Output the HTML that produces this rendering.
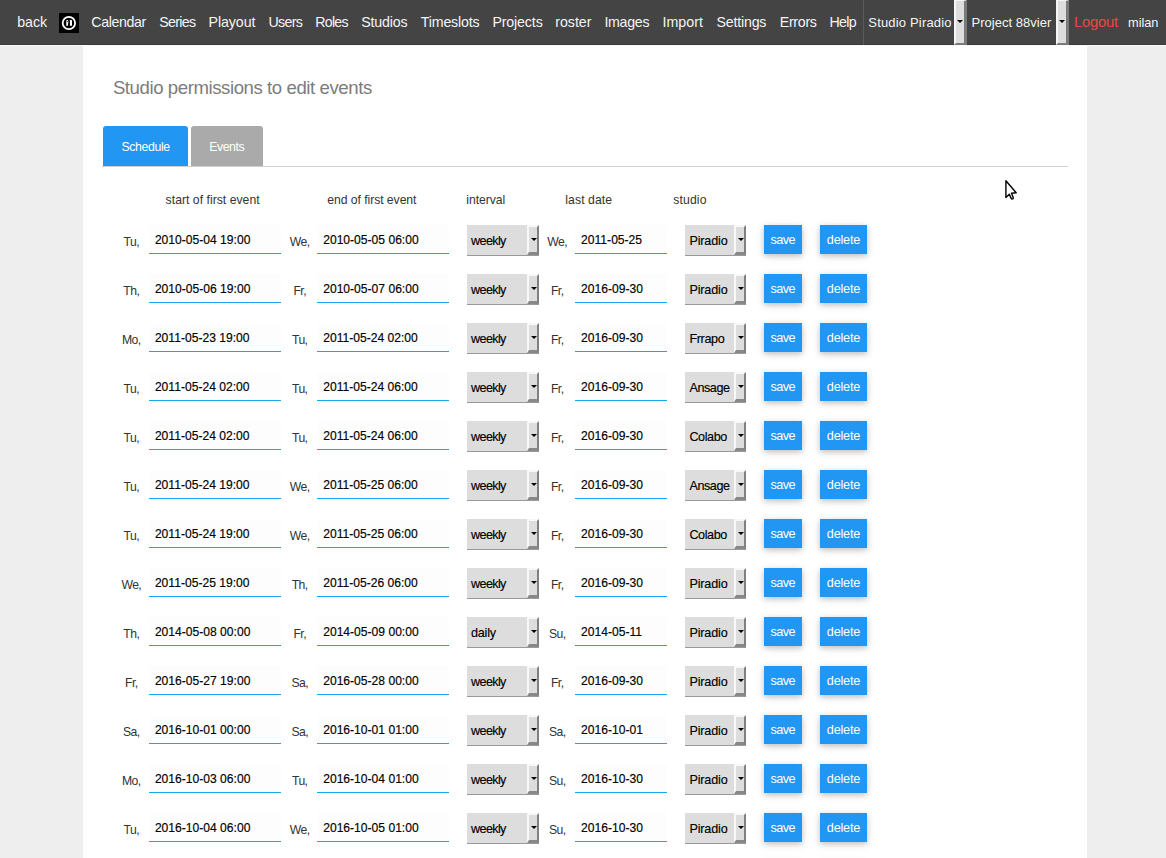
<!DOCTYPE html>
<html><head><meta charset="utf-8"><style>
html,body{margin:0;padding:0;width:1166px;height:858px;overflow:hidden;background:#eeeeee;}
body{position:relative;font-family:"Liberation Sans",sans-serif;}
.t{position:absolute;line-height:1;white-space:nowrap;}
#nav{position:absolute;left:0;top:0;width:1166px;height:44px;background:#444444;border-bottom:1px solid #3a3a3a;}
#navline{position:absolute;left:0;top:45px;width:1166px;height:1px;background:#fafafa;}
#panel{position:absolute;left:83px;top:45px;width:1004px;height:813px;background:#ffffff;}
.logo{position:absolute;left:59px;top:13px;width:20px;height:20px;background:#000;}
.nsel{position:absolute;top:0;height:45px;}
.nab{position:absolute;top:0;width:8px;height:42px;background:#dddddd;border-left:2px solid #f6f6f6;border-top:1px solid #f6f6f6;border-right:3px solid #7a7a7a;border-bottom:2px solid #7a7a7a;}
.nab i,.ab i{position:absolute;left:1px;width:0;height:0;border-left:3px solid transparent;border-right:3px solid transparent;border-top:3.5px solid #000;}
.nab i{top:19px;left:0.5px;}
.tab{position:absolute;top:126px;height:40px;border-radius:3px 3px 0 0;}
#tabline{position:absolute;left:102px;top:165.5px;width:966px;height:1px;background:#cfcfcf;}
.inp{position:absolute;height:28px;background:#fdfdfd;border-bottom:1px solid #18a8f0;}
.sel{position:absolute;height:30px;background:#dddddd;border-bottom:1px solid #999999;}
.ab{position:absolute;right:0;top:0;width:8px;height:25px;background:#dddddd;border-left:2px solid #f8f8f8;border-top:2px solid #f8f8f8;border-right:2px solid #808080;border-bottom:3px solid #888888;}
.ab i{top:11px;left:1.6px;}
.btn{position:absolute;height:29px;background:#2196f3;box-shadow:0 2px 5px 0 rgba(0,0,0,.16),0 2px 10px 0 rgba(0,0,0,.12);}
</style></head><body>
<div id="panel"></div>
<div id="nav"></div><div id="navline"></div>
<div class="logo"><svg width="20" height="20" viewBox="0 0 20 20"><circle cx="9.9" cy="10" r="6.2" fill="none" stroke="#fff" stroke-width="1.8"/><path d="M7.3 12.8V8.2Q7.1 7 8.2 7Q9.3 7 9.3 8.2V10.2L9 10.8V12.8Z" fill="#fff"/><circle cx="8.3" cy="8.6" r="0.5" fill="#000"/><rect x="10.9" y="7.1" width="2.1" height="5.7" rx="0.3" fill="#fff"/></svg></div>
<div style="position:absolute;left:863px;top:0;width:1px;height:45px;background:#5a5a5a"></div>
<div class="nab" style="left:954px"><i></i></div>
<div class="nab" style="left:1056px"><i></i></div>
<div class="tab" style="left:103px;width:85px;background:#2196f3"></div>
<div class="tab" style="left:191px;width:72px;background:#aaaaaa"></div>
<div id="tabline"></div>
<div class="t" style="left:17.20px;top:14.93px;font-size:14.2px;color:#f4f4f4;letter-spacing:-0.017px;">back</div>
<div class="t" style="left:91.30px;top:14.93px;font-size:14.2px;color:#f4f4f4;letter-spacing:-0.379px;">Calendar</div>
<div class="t" style="left:159.20px;top:14.93px;font-size:14.2px;color:#f4f4f4;letter-spacing:-0.650px;">Series</div>
<div class="t" style="left:208.50px;top:14.93px;font-size:14.2px;color:#f4f4f4;letter-spacing:-0.058px;">Playout</div>
<div class="t" style="left:268.50px;top:14.93px;font-size:14.2px;color:#f4f4f4;letter-spacing:-0.650px;">Users</div>
<div class="t" style="left:315.30px;top:14.93px;font-size:14.2px;color:#f4f4f4;letter-spacing:-0.775px;">Roles</div>
<div class="t" style="left:361.30px;top:14.93px;font-size:14.2px;color:#f4f4f4;letter-spacing:-0.175px;">Studios</div>
<div class="t" style="left:420.80px;top:14.93px;font-size:14.2px;color:#f4f4f4;letter-spacing:-0.169px;">Timeslots</div>
<div class="t" style="left:492.40px;top:14.93px;font-size:14.2px;color:#f4f4f4;letter-spacing:-0.129px;">Projects</div>
<div class="t" style="left:555.30px;top:14.93px;font-size:14.2px;color:#f4f4f4;letter-spacing:-0.040px;">roster</div>
<div class="t" style="left:604.40px;top:14.93px;font-size:14.2px;color:#f4f4f4;letter-spacing:-0.270px;">Images</div>
<div class="t" style="left:662.50px;top:14.93px;font-size:14.2px;color:#f4f4f4;letter-spacing:0.030px;">Import</div>
<div class="t" style="left:716.60px;top:14.93px;font-size:14.2px;color:#f4f4f4;letter-spacing:-0.200px;">Settings</div>
<div class="t" style="left:779.70px;top:14.93px;font-size:14.2px;color:#f4f4f4;letter-spacing:-0.270px;">Errors</div>
<div class="t" style="left:829.40px;top:14.93px;font-size:14.2px;color:#f4f4f4;letter-spacing:-0.667px;">Help</div>
<div class="t" style="left:868.30px;top:15.95px;font-size:13px;color:#f4f4f4;letter-spacing:0.173px;">Studio Piradio</div>
<div class="t" style="left:971.60px;top:15.95px;font-size:13px;color:#f4f4f4;letter-spacing:0.015px;">Project 88vier</div>
<div class="t" style="left:1073.90px;top:14.72px;font-size:14.8px;color:#f04545;letter-spacing:-0.210px;">Logout</div>
<div class="t" style="left:1128.10px;top:16.72px;font-size:12.8px;color:#f4f4f4;letter-spacing:-0.100px;">milan</div>
<div class="t" style="left:112.90px;top:78.89px;font-size:18.6px;color:#7c7c7c;letter-spacing:-0.423px;">Studio permissions to edit events</div>
<div class="t" style="left:121.50px;top:141.14px;font-size:12.3px;color:#ffffff;letter-spacing:-0.371px;">Schedule</div>
<div class="t" style="left:209.20px;top:141.14px;font-size:12.3px;color:#ffffff;letter-spacing:-0.420px;">Events</div>
<div class="t" style="left:165.60px;top:193.83px;font-size:12.2px;color:#333333;letter-spacing:0.029px;">start of first event</div>
<div class="t" style="left:327.20px;top:193.83px;font-size:12.2px;color:#333333;letter-spacing:-0.047px;">end of first event</div>
<div class="t" style="left:466.30px;top:193.83px;font-size:12.2px;color:#333333;letter-spacing:-0.064px;">interval</div>
<div class="t" style="left:565.30px;top:193.83px;font-size:12.2px;color:#333333;letter-spacing:0.088px;">last date</div>
<div class="t" style="left:673.30px;top:193.83px;font-size:12.2px;color:#333333;letter-spacing:0.130px;">studio</div>
<div class="t" style="left:123.55px;top:235.93px;font-size:12.2px;color:#333333;letter-spacing:-0.550px;">Tu,</div>
<div class="inp" style="left:149px;top:225px;width:132px"></div>
<div class="t" style="left:154.90px;top:233.72px;font-size:12.1px;color:#000000;letter-spacing:0.000px;-webkit-text-stroke:0.15px #000;">2010-05-04 19:00</div>
<div class="t" style="left:289.82px;top:235.93px;font-size:12.2px;color:#333333;letter-spacing:-0.550px;">We,</div>
<div class="inp" style="left:317px;top:225px;width:132px"></div>
<div class="t" style="left:323.20px;top:233.72px;font-size:12.1px;color:#000000;letter-spacing:0.000px;-webkit-text-stroke:0.15px #000;">2010-05-05 06:00</div>
<div class="sel" style="left:467px;top:225px;width:72px"><div class="ab"><i></i></div></div>
<div class="t" style="left:471.05px;top:234.79px;font-size:12.6px;color:#000000;letter-spacing:-0.630px;-webkit-text-stroke:0.15px #000;">weekly</div>
<div class="t" style="left:547.33px;top:235.93px;font-size:12.2px;color:#333333;letter-spacing:-0.550px;">We,</div>
<div class="inp" style="left:575px;top:225px;width:92px"></div>
<div class="t" style="left:581.10px;top:233.72px;font-size:12.1px;color:#000000;letter-spacing:0.000px;-webkit-text-stroke:0.15px #000;">2011-05-25</div>
<div class="sel" style="left:685px;top:225px;width:61px"><div class="ab"><i></i></div></div>
<div class="t" style="left:689.40px;top:234.79px;font-size:12.6px;color:#000000;letter-spacing:-0.150px;-webkit-text-stroke:0.15px #000;">Piradio</div>
<div class="btn" style="left:764px;top:225px;width:38px"></div>
<div class="t" style="left:770.60px;top:234.01px;font-size:12.7px;color:#ffffff;letter-spacing:-0.650px;">save</div>
<div class="btn" style="left:820px;top:225px;width:47px"></div>
<div class="t" style="left:826.80px;top:233.91px;font-size:12.7px;color:#ffffff;letter-spacing:-0.220px;">delete</div>
<div class="t" style="left:123.32px;top:284.93px;font-size:12.2px;color:#333333;letter-spacing:-0.550px;">Th,</div>
<div class="inp" style="left:149px;top:274px;width:132px"></div>
<div class="t" style="left:154.90px;top:282.71px;font-size:12.1px;color:#000000;letter-spacing:0.000px;-webkit-text-stroke:0.15px #000;">2010-05-06 19:00</div>
<div class="t" style="left:293.43px;top:284.93px;font-size:12.2px;color:#333333;letter-spacing:-0.550px;">Fr,</div>
<div class="inp" style="left:317px;top:274px;width:132px"></div>
<div class="t" style="left:323.20px;top:282.71px;font-size:12.1px;color:#000000;letter-spacing:0.000px;-webkit-text-stroke:0.15px #000;">2010-05-07 06:00</div>
<div class="sel" style="left:467px;top:274px;width:72px"><div class="ab"><i></i></div></div>
<div class="t" style="left:471.05px;top:283.79px;font-size:12.6px;color:#000000;letter-spacing:-0.630px;-webkit-text-stroke:0.15px #000;">weekly</div>
<div class="t" style="left:550.92px;top:284.93px;font-size:12.2px;color:#333333;letter-spacing:-0.550px;">Fr,</div>
<div class="inp" style="left:575px;top:274px;width:92px"></div>
<div class="t" style="left:581.10px;top:282.71px;font-size:12.1px;color:#000000;letter-spacing:0.000px;-webkit-text-stroke:0.15px #000;">2016-09-30</div>
<div class="sel" style="left:685px;top:274px;width:61px"><div class="ab"><i></i></div></div>
<div class="t" style="left:689.40px;top:283.79px;font-size:12.6px;color:#000000;letter-spacing:-0.150px;-webkit-text-stroke:0.15px #000;">Piradio</div>
<div class="btn" style="left:764px;top:274px;width:38px"></div>
<div class="t" style="left:770.60px;top:283.00px;font-size:12.7px;color:#ffffff;letter-spacing:-0.650px;">save</div>
<div class="btn" style="left:820px;top:274px;width:47px"></div>
<div class="t" style="left:826.80px;top:282.90px;font-size:12.7px;color:#ffffff;letter-spacing:-0.220px;">delete</div>
<div class="t" style="left:121.97px;top:333.93px;font-size:12.2px;color:#333333;letter-spacing:-0.550px;">Mo,</div>
<div class="inp" style="left:149px;top:323px;width:132px"></div>
<div class="t" style="left:154.90px;top:331.71px;font-size:12.1px;color:#000000;letter-spacing:0.000px;-webkit-text-stroke:0.15px #000;">2011-05-23 19:00</div>
<div class="t" style="left:291.95px;top:333.93px;font-size:12.2px;color:#333333;letter-spacing:-0.550px;">Tu,</div>
<div class="inp" style="left:317px;top:323px;width:132px"></div>
<div class="t" style="left:323.20px;top:331.71px;font-size:12.1px;color:#000000;letter-spacing:0.000px;-webkit-text-stroke:0.15px #000;">2011-05-24 02:00</div>
<div class="sel" style="left:467px;top:323px;width:72px"><div class="ab"><i></i></div></div>
<div class="t" style="left:471.05px;top:332.79px;font-size:12.6px;color:#000000;letter-spacing:-0.630px;-webkit-text-stroke:0.15px #000;">weekly</div>
<div class="t" style="left:550.92px;top:333.93px;font-size:12.2px;color:#333333;letter-spacing:-0.550px;">Fr,</div>
<div class="inp" style="left:575px;top:323px;width:92px"></div>
<div class="t" style="left:581.10px;top:331.71px;font-size:12.1px;color:#000000;letter-spacing:0.000px;-webkit-text-stroke:0.15px #000;">2016-09-30</div>
<div class="sel" style="left:685px;top:323px;width:61px"><div class="ab"><i></i></div></div>
<div class="t" style="left:689.40px;top:332.79px;font-size:12.6px;color:#000000;letter-spacing:-0.360px;-webkit-text-stroke:0.15px #000;">Frrapo</div>
<div class="btn" style="left:764px;top:323px;width:38px"></div>
<div class="t" style="left:770.60px;top:332.00px;font-size:12.7px;color:#ffffff;letter-spacing:-0.650px;">save</div>
<div class="btn" style="left:820px;top:323px;width:47px"></div>
<div class="t" style="left:826.80px;top:331.90px;font-size:12.7px;color:#ffffff;letter-spacing:-0.220px;">delete</div>
<div class="t" style="left:123.55px;top:382.93px;font-size:12.2px;color:#333333;letter-spacing:-0.550px;">Tu,</div>
<div class="inp" style="left:149px;top:372px;width:132px"></div>
<div class="t" style="left:154.90px;top:380.71px;font-size:12.1px;color:#000000;letter-spacing:0.000px;-webkit-text-stroke:0.15px #000;">2011-05-24 02:00</div>
<div class="t" style="left:291.95px;top:382.93px;font-size:12.2px;color:#333333;letter-spacing:-0.550px;">Tu,</div>
<div class="inp" style="left:317px;top:372px;width:132px"></div>
<div class="t" style="left:323.20px;top:380.71px;font-size:12.1px;color:#000000;letter-spacing:0.000px;-webkit-text-stroke:0.15px #000;">2011-05-24 06:00</div>
<div class="sel" style="left:467px;top:372px;width:72px"><div class="ab"><i></i></div></div>
<div class="t" style="left:471.05px;top:381.79px;font-size:12.6px;color:#000000;letter-spacing:-0.630px;-webkit-text-stroke:0.15px #000;">weekly</div>
<div class="t" style="left:550.92px;top:382.93px;font-size:12.2px;color:#333333;letter-spacing:-0.550px;">Fr,</div>
<div class="inp" style="left:575px;top:372px;width:92px"></div>
<div class="t" style="left:581.10px;top:380.71px;font-size:12.1px;color:#000000;letter-spacing:0.000px;-webkit-text-stroke:0.15px #000;">2016-09-30</div>
<div class="sel" style="left:685px;top:372px;width:61px"><div class="ab"><i></i></div></div>
<div class="t" style="left:689.40px;top:381.79px;font-size:12.6px;color:#000000;letter-spacing:-0.410px;-webkit-text-stroke:0.15px #000;">Ansage</div>
<div class="btn" style="left:764px;top:372px;width:38px"></div>
<div class="t" style="left:770.60px;top:381.00px;font-size:12.7px;color:#ffffff;letter-spacing:-0.650px;">save</div>
<div class="btn" style="left:820px;top:372px;width:47px"></div>
<div class="t" style="left:826.80px;top:380.90px;font-size:12.7px;color:#ffffff;letter-spacing:-0.220px;">delete</div>
<div class="t" style="left:123.55px;top:431.93px;font-size:12.2px;color:#333333;letter-spacing:-0.550px;">Tu,</div>
<div class="inp" style="left:149px;top:421px;width:132px"></div>
<div class="t" style="left:154.90px;top:429.71px;font-size:12.1px;color:#000000;letter-spacing:0.000px;-webkit-text-stroke:0.15px #000;">2011-05-24 02:00</div>
<div class="t" style="left:291.95px;top:431.93px;font-size:12.2px;color:#333333;letter-spacing:-0.550px;">Tu,</div>
<div class="inp" style="left:317px;top:421px;width:132px"></div>
<div class="t" style="left:323.20px;top:429.71px;font-size:12.1px;color:#000000;letter-spacing:0.000px;-webkit-text-stroke:0.15px #000;">2011-05-24 06:00</div>
<div class="sel" style="left:467px;top:421px;width:72px"><div class="ab"><i></i></div></div>
<div class="t" style="left:471.05px;top:430.79px;font-size:12.6px;color:#000000;letter-spacing:-0.630px;-webkit-text-stroke:0.15px #000;">weekly</div>
<div class="t" style="left:550.92px;top:431.93px;font-size:12.2px;color:#333333;letter-spacing:-0.550px;">Fr,</div>
<div class="inp" style="left:575px;top:421px;width:92px"></div>
<div class="t" style="left:581.10px;top:429.71px;font-size:12.1px;color:#000000;letter-spacing:0.000px;-webkit-text-stroke:0.15px #000;">2016-09-30</div>
<div class="sel" style="left:685px;top:421px;width:61px"><div class="ab"><i></i></div></div>
<div class="t" style="left:689.40px;top:430.79px;font-size:12.6px;color:#000000;letter-spacing:-0.410px;-webkit-text-stroke:0.15px #000;">Colabo</div>
<div class="btn" style="left:764px;top:421px;width:38px"></div>
<div class="t" style="left:770.60px;top:430.00px;font-size:12.7px;color:#ffffff;letter-spacing:-0.650px;">save</div>
<div class="btn" style="left:820px;top:421px;width:47px"></div>
<div class="t" style="left:826.80px;top:429.90px;font-size:12.7px;color:#ffffff;letter-spacing:-0.220px;">delete</div>
<div class="t" style="left:123.55px;top:480.93px;font-size:12.2px;color:#333333;letter-spacing:-0.550px;">Tu,</div>
<div class="inp" style="left:149px;top:470px;width:132px"></div>
<div class="t" style="left:154.90px;top:478.71px;font-size:12.1px;color:#000000;letter-spacing:0.000px;-webkit-text-stroke:0.15px #000;">2011-05-24 19:00</div>
<div class="t" style="left:289.82px;top:480.93px;font-size:12.2px;color:#333333;letter-spacing:-0.550px;">We,</div>
<div class="inp" style="left:317px;top:470px;width:132px"></div>
<div class="t" style="left:323.20px;top:478.71px;font-size:12.1px;color:#000000;letter-spacing:0.000px;-webkit-text-stroke:0.15px #000;">2011-05-25 06:00</div>
<div class="sel" style="left:467px;top:470px;width:72px"><div class="ab"><i></i></div></div>
<div class="t" style="left:471.05px;top:479.79px;font-size:12.6px;color:#000000;letter-spacing:-0.630px;-webkit-text-stroke:0.15px #000;">weekly</div>
<div class="t" style="left:550.92px;top:480.93px;font-size:12.2px;color:#333333;letter-spacing:-0.550px;">Fr,</div>
<div class="inp" style="left:575px;top:470px;width:92px"></div>
<div class="t" style="left:581.10px;top:478.71px;font-size:12.1px;color:#000000;letter-spacing:0.000px;-webkit-text-stroke:0.15px #000;">2016-09-30</div>
<div class="sel" style="left:685px;top:470px;width:61px"><div class="ab"><i></i></div></div>
<div class="t" style="left:689.40px;top:479.79px;font-size:12.6px;color:#000000;letter-spacing:-0.410px;-webkit-text-stroke:0.15px #000;">Ansage</div>
<div class="btn" style="left:764px;top:470px;width:38px"></div>
<div class="t" style="left:770.60px;top:479.00px;font-size:12.7px;color:#ffffff;letter-spacing:-0.650px;">save</div>
<div class="btn" style="left:820px;top:470px;width:47px"></div>
<div class="t" style="left:826.80px;top:478.90px;font-size:12.7px;color:#ffffff;letter-spacing:-0.220px;">delete</div>
<div class="t" style="left:123.55px;top:529.93px;font-size:12.2px;color:#333333;letter-spacing:-0.550px;">Tu,</div>
<div class="inp" style="left:149px;top:519px;width:132px"></div>
<div class="t" style="left:154.90px;top:527.72px;font-size:12.1px;color:#000000;letter-spacing:0.000px;-webkit-text-stroke:0.15px #000;">2011-05-24 19:00</div>
<div class="t" style="left:289.82px;top:529.93px;font-size:12.2px;color:#333333;letter-spacing:-0.550px;">We,</div>
<div class="inp" style="left:317px;top:519px;width:132px"></div>
<div class="t" style="left:323.20px;top:527.72px;font-size:12.1px;color:#000000;letter-spacing:0.000px;-webkit-text-stroke:0.15px #000;">2011-05-25 06:00</div>
<div class="sel" style="left:467px;top:519px;width:72px"><div class="ab"><i></i></div></div>
<div class="t" style="left:471.05px;top:528.79px;font-size:12.6px;color:#000000;letter-spacing:-0.630px;-webkit-text-stroke:0.15px #000;">weekly</div>
<div class="t" style="left:550.92px;top:529.93px;font-size:12.2px;color:#333333;letter-spacing:-0.550px;">Fr,</div>
<div class="inp" style="left:575px;top:519px;width:92px"></div>
<div class="t" style="left:581.10px;top:527.72px;font-size:12.1px;color:#000000;letter-spacing:0.000px;-webkit-text-stroke:0.15px #000;">2016-09-30</div>
<div class="sel" style="left:685px;top:519px;width:61px"><div class="ab"><i></i></div></div>
<div class="t" style="left:689.40px;top:528.79px;font-size:12.6px;color:#000000;letter-spacing:-0.410px;-webkit-text-stroke:0.15px #000;">Colabo</div>
<div class="btn" style="left:764px;top:519px;width:38px"></div>
<div class="t" style="left:770.60px;top:528.00px;font-size:12.7px;color:#ffffff;letter-spacing:-0.650px;">save</div>
<div class="btn" style="left:820px;top:519px;width:47px"></div>
<div class="t" style="left:826.80px;top:527.91px;font-size:12.7px;color:#ffffff;letter-spacing:-0.220px;">delete</div>
<div class="t" style="left:121.42px;top:578.93px;font-size:12.2px;color:#333333;letter-spacing:-0.550px;">We,</div>
<div class="inp" style="left:149px;top:568px;width:132px"></div>
<div class="t" style="left:154.90px;top:576.72px;font-size:12.1px;color:#000000;letter-spacing:0.000px;-webkit-text-stroke:0.15px #000;">2011-05-25 19:00</div>
<div class="t" style="left:291.73px;top:578.93px;font-size:12.2px;color:#333333;letter-spacing:-0.550px;">Th,</div>
<div class="inp" style="left:317px;top:568px;width:132px"></div>
<div class="t" style="left:323.20px;top:576.72px;font-size:12.1px;color:#000000;letter-spacing:0.000px;-webkit-text-stroke:0.15px #000;">2011-05-26 06:00</div>
<div class="sel" style="left:467px;top:568px;width:72px"><div class="ab"><i></i></div></div>
<div class="t" style="left:471.05px;top:577.79px;font-size:12.6px;color:#000000;letter-spacing:-0.630px;-webkit-text-stroke:0.15px #000;">weekly</div>
<div class="t" style="left:550.92px;top:578.93px;font-size:12.2px;color:#333333;letter-spacing:-0.550px;">Fr,</div>
<div class="inp" style="left:575px;top:568px;width:92px"></div>
<div class="t" style="left:581.10px;top:576.72px;font-size:12.1px;color:#000000;letter-spacing:0.000px;-webkit-text-stroke:0.15px #000;">2016-09-30</div>
<div class="sel" style="left:685px;top:568px;width:61px"><div class="ab"><i></i></div></div>
<div class="t" style="left:689.40px;top:577.79px;font-size:12.6px;color:#000000;letter-spacing:-0.150px;-webkit-text-stroke:0.15px #000;">Piradio</div>
<div class="btn" style="left:764px;top:568px;width:38px"></div>
<div class="t" style="left:770.60px;top:577.00px;font-size:12.7px;color:#ffffff;letter-spacing:-0.650px;">save</div>
<div class="btn" style="left:820px;top:568px;width:47px"></div>
<div class="t" style="left:826.80px;top:576.91px;font-size:12.7px;color:#ffffff;letter-spacing:-0.220px;">delete</div>
<div class="t" style="left:123.32px;top:627.93px;font-size:12.2px;color:#333333;letter-spacing:-0.550px;">Th,</div>
<div class="inp" style="left:149px;top:617px;width:132px"></div>
<div class="t" style="left:154.90px;top:625.72px;font-size:12.1px;color:#000000;letter-spacing:0.000px;-webkit-text-stroke:0.15px #000;">2014-05-08 00:00</div>
<div class="t" style="left:293.43px;top:627.93px;font-size:12.2px;color:#333333;letter-spacing:-0.550px;">Fr,</div>
<div class="inp" style="left:317px;top:617px;width:132px"></div>
<div class="t" style="left:323.20px;top:625.72px;font-size:12.1px;color:#000000;letter-spacing:0.000px;-webkit-text-stroke:0.15px #000;">2014-05-09 00:00</div>
<div class="sel" style="left:467px;top:617px;width:72px"><div class="ab"><i></i></div></div>
<div class="t" style="left:471.00px;top:626.79px;font-size:12.6px;color:#000000;letter-spacing:-0.225px;-webkit-text-stroke:0.15px #000;">daily</div>
<div class="t" style="left:548.90px;top:627.93px;font-size:12.2px;color:#333333;letter-spacing:-0.550px;">Su,</div>
<div class="inp" style="left:575px;top:617px;width:92px"></div>
<div class="t" style="left:581.10px;top:625.72px;font-size:12.1px;color:#000000;letter-spacing:0.000px;-webkit-text-stroke:0.15px #000;">2014-05-11</div>
<div class="sel" style="left:685px;top:617px;width:61px"><div class="ab"><i></i></div></div>
<div class="t" style="left:689.40px;top:626.79px;font-size:12.6px;color:#000000;letter-spacing:-0.150px;-webkit-text-stroke:0.15px #000;">Piradio</div>
<div class="btn" style="left:764px;top:617px;width:38px"></div>
<div class="t" style="left:770.60px;top:626.00px;font-size:12.7px;color:#ffffff;letter-spacing:-0.650px;">save</div>
<div class="btn" style="left:820px;top:617px;width:47px"></div>
<div class="t" style="left:826.80px;top:625.91px;font-size:12.7px;color:#ffffff;letter-spacing:-0.220px;">delete</div>
<div class="t" style="left:125.02px;top:676.93px;font-size:12.2px;color:#333333;letter-spacing:-0.550px;">Fr,</div>
<div class="inp" style="left:149px;top:666px;width:132px"></div>
<div class="t" style="left:154.90px;top:674.72px;font-size:12.1px;color:#000000;letter-spacing:0.000px;-webkit-text-stroke:0.15px #000;">2016-05-27 19:00</div>
<div class="t" style="left:291.40px;top:676.93px;font-size:12.2px;color:#333333;letter-spacing:-0.550px;">Sa,</div>
<div class="inp" style="left:317px;top:666px;width:132px"></div>
<div class="t" style="left:323.20px;top:674.72px;font-size:12.1px;color:#000000;letter-spacing:0.000px;-webkit-text-stroke:0.15px #000;">2016-05-28 00:00</div>
<div class="sel" style="left:467px;top:666px;width:72px"><div class="ab"><i></i></div></div>
<div class="t" style="left:471.05px;top:675.79px;font-size:12.6px;color:#000000;letter-spacing:-0.630px;-webkit-text-stroke:0.15px #000;">weekly</div>
<div class="t" style="left:550.92px;top:676.93px;font-size:12.2px;color:#333333;letter-spacing:-0.550px;">Fr,</div>
<div class="inp" style="left:575px;top:666px;width:92px"></div>
<div class="t" style="left:581.10px;top:674.72px;font-size:12.1px;color:#000000;letter-spacing:0.000px;-webkit-text-stroke:0.15px #000;">2016-09-30</div>
<div class="sel" style="left:685px;top:666px;width:61px"><div class="ab"><i></i></div></div>
<div class="t" style="left:689.40px;top:675.79px;font-size:12.6px;color:#000000;letter-spacing:-0.150px;-webkit-text-stroke:0.15px #000;">Piradio</div>
<div class="btn" style="left:764px;top:666px;width:38px"></div>
<div class="t" style="left:770.60px;top:675.00px;font-size:12.7px;color:#ffffff;letter-spacing:-0.650px;">save</div>
<div class="btn" style="left:820px;top:666px;width:47px"></div>
<div class="t" style="left:826.80px;top:674.91px;font-size:12.7px;color:#ffffff;letter-spacing:-0.220px;">delete</div>
<div class="t" style="left:123.00px;top:725.93px;font-size:12.2px;color:#333333;letter-spacing:-0.550px;">Sa,</div>
<div class="inp" style="left:149px;top:715px;width:132px"></div>
<div class="t" style="left:154.90px;top:723.72px;font-size:12.1px;color:#000000;letter-spacing:0.000px;-webkit-text-stroke:0.15px #000;">2016-10-01 00:00</div>
<div class="t" style="left:291.40px;top:725.93px;font-size:12.2px;color:#333333;letter-spacing:-0.550px;">Sa,</div>
<div class="inp" style="left:317px;top:715px;width:132px"></div>
<div class="t" style="left:323.20px;top:723.72px;font-size:12.1px;color:#000000;letter-spacing:0.000px;-webkit-text-stroke:0.15px #000;">2016-10-01 01:00</div>
<div class="sel" style="left:467px;top:715px;width:72px"><div class="ab"><i></i></div></div>
<div class="t" style="left:471.05px;top:724.79px;font-size:12.6px;color:#000000;letter-spacing:-0.630px;-webkit-text-stroke:0.15px #000;">weekly</div>
<div class="t" style="left:548.90px;top:725.93px;font-size:12.2px;color:#333333;letter-spacing:-0.550px;">Sa,</div>
<div class="inp" style="left:575px;top:715px;width:92px"></div>
<div class="t" style="left:581.10px;top:723.72px;font-size:12.1px;color:#000000;letter-spacing:0.000px;-webkit-text-stroke:0.15px #000;">2016-10-01</div>
<div class="sel" style="left:685px;top:715px;width:61px"><div class="ab"><i></i></div></div>
<div class="t" style="left:689.40px;top:724.79px;font-size:12.6px;color:#000000;letter-spacing:-0.150px;-webkit-text-stroke:0.15px #000;">Piradio</div>
<div class="btn" style="left:764px;top:715px;width:38px"></div>
<div class="t" style="left:770.60px;top:724.00px;font-size:12.7px;color:#ffffff;letter-spacing:-0.650px;">save</div>
<div class="btn" style="left:820px;top:715px;width:47px"></div>
<div class="t" style="left:826.80px;top:723.91px;font-size:12.7px;color:#ffffff;letter-spacing:-0.220px;">delete</div>
<div class="t" style="left:121.97px;top:774.93px;font-size:12.2px;color:#333333;letter-spacing:-0.550px;">Mo,</div>
<div class="inp" style="left:149px;top:764px;width:132px"></div>
<div class="t" style="left:154.90px;top:772.72px;font-size:12.1px;color:#000000;letter-spacing:0.000px;-webkit-text-stroke:0.15px #000;">2016-10-03 06:00</div>
<div class="t" style="left:291.95px;top:774.93px;font-size:12.2px;color:#333333;letter-spacing:-0.550px;">Tu,</div>
<div class="inp" style="left:317px;top:764px;width:132px"></div>
<div class="t" style="left:323.20px;top:772.72px;font-size:12.1px;color:#000000;letter-spacing:0.000px;-webkit-text-stroke:0.15px #000;">2016-10-04 01:00</div>
<div class="sel" style="left:467px;top:764px;width:72px"><div class="ab"><i></i></div></div>
<div class="t" style="left:471.05px;top:773.79px;font-size:12.6px;color:#000000;letter-spacing:-0.630px;-webkit-text-stroke:0.15px #000;">weekly</div>
<div class="t" style="left:548.90px;top:774.93px;font-size:12.2px;color:#333333;letter-spacing:-0.550px;">Su,</div>
<div class="inp" style="left:575px;top:764px;width:92px"></div>
<div class="t" style="left:581.10px;top:772.72px;font-size:12.1px;color:#000000;letter-spacing:0.000px;-webkit-text-stroke:0.15px #000;">2016-10-30</div>
<div class="sel" style="left:685px;top:764px;width:61px"><div class="ab"><i></i></div></div>
<div class="t" style="left:689.40px;top:773.79px;font-size:12.6px;color:#000000;letter-spacing:-0.150px;-webkit-text-stroke:0.15px #000;">Piradio</div>
<div class="btn" style="left:764px;top:764px;width:38px"></div>
<div class="t" style="left:770.60px;top:773.00px;font-size:12.7px;color:#ffffff;letter-spacing:-0.650px;">save</div>
<div class="btn" style="left:820px;top:764px;width:47px"></div>
<div class="t" style="left:826.80px;top:772.91px;font-size:12.7px;color:#ffffff;letter-spacing:-0.220px;">delete</div>
<div class="t" style="left:123.55px;top:823.93px;font-size:12.2px;color:#333333;letter-spacing:-0.550px;">Tu,</div>
<div class="inp" style="left:149px;top:813px;width:132px"></div>
<div class="t" style="left:154.90px;top:821.72px;font-size:12.1px;color:#000000;letter-spacing:0.000px;-webkit-text-stroke:0.15px #000;">2016-10-04 06:00</div>
<div class="t" style="left:289.82px;top:823.93px;font-size:12.2px;color:#333333;letter-spacing:-0.550px;">We,</div>
<div class="inp" style="left:317px;top:813px;width:132px"></div>
<div class="t" style="left:323.20px;top:821.72px;font-size:12.1px;color:#000000;letter-spacing:0.000px;-webkit-text-stroke:0.15px #000;">2016-10-05 01:00</div>
<div class="sel" style="left:467px;top:813px;width:72px"><div class="ab"><i></i></div></div>
<div class="t" style="left:471.05px;top:822.79px;font-size:12.6px;color:#000000;letter-spacing:-0.630px;-webkit-text-stroke:0.15px #000;">weekly</div>
<div class="t" style="left:548.90px;top:823.93px;font-size:12.2px;color:#333333;letter-spacing:-0.550px;">Su,</div>
<div class="inp" style="left:575px;top:813px;width:92px"></div>
<div class="t" style="left:581.10px;top:821.72px;font-size:12.1px;color:#000000;letter-spacing:0.000px;-webkit-text-stroke:0.15px #000;">2016-10-30</div>
<div class="sel" style="left:685px;top:813px;width:61px"><div class="ab"><i></i></div></div>
<div class="t" style="left:689.40px;top:822.79px;font-size:12.6px;color:#000000;letter-spacing:-0.150px;-webkit-text-stroke:0.15px #000;">Piradio</div>
<div class="btn" style="left:764px;top:813px;width:38px"></div>
<div class="t" style="left:770.60px;top:822.00px;font-size:12.7px;color:#ffffff;letter-spacing:-0.650px;">save</div>
<div class="btn" style="left:820px;top:813px;width:47px"></div>
<div class="t" style="left:826.80px;top:821.91px;font-size:12.7px;color:#ffffff;letter-spacing:-0.220px;">delete</div>
<div class="btn" style="left:764px;top:862px;width:38px"></div>
<div class="btn" style="left:820px;top:862px;width:47px"></div>
<svg style="position:absolute;left:1004px;top:179px" width="16" height="24" viewBox="0 0 16 24"><path d="M1.9 1.8V18.6L5.3 15.3L7.3 19.6Q7.7 20.2 8.4 19.9L9 19.6Q9.5 19.3 9.3 18.7L7.5 14.2L12.2 13.7Z" fill="#fff" stroke="#000" stroke-width="1.4" stroke-linejoin="round"/></svg>
</body></html>
